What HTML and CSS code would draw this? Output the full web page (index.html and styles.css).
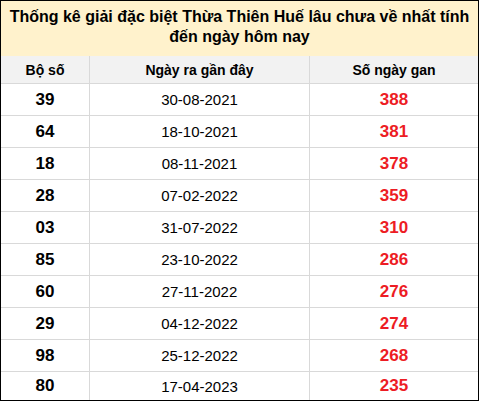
FILE: index.html
```html
<!DOCTYPE html>
<html lang="vi">
<head>
<meta charset="utf-8">
<link rel="stylesheet" href="styles.css">
</head>
<body>
<div class="box">
  <div class="title">Thống kê giải đặc biệt Thừa Thiên Huế lâu chưa về nhất tính<br>đến ngày hôm nay</div>
  <table class="tbl">
    <thead>
      <tr><th class="c1">Bộ số</th><th class="c2">Ngày ra gần đây</th><th class="c3">Số ngày gan</th></tr>
    </thead>
    <tbody>
      <tr><td class="num">39</td><td class="date">30-08-2021</td><td class="gan">388</td></tr>
      <tr><td class="num">64</td><td class="date">18-10-2021</td><td class="gan">381</td></tr>
      <tr><td class="num">18</td><td class="date">08-11-2021</td><td class="gan">378</td></tr>
      <tr><td class="num">28</td><td class="date">07-02-2022</td><td class="gan">359</td></tr>
      <tr><td class="num">03</td><td class="date">31-07-2022</td><td class="gan">310</td></tr>
      <tr><td class="num">85</td><td class="date">23-10-2022</td><td class="gan">286</td></tr>
      <tr><td class="num">60</td><td class="date">27-11-2022</td><td class="gan">276</td></tr>
      <tr><td class="num">29</td><td class="date">04-12-2022</td><td class="gan">274</td></tr>
      <tr><td class="num">98</td><td class="date">25-12-2022</td><td class="gan">268</td></tr>
      <tr class="last"><td class="num">80</td><td class="date">17-04-2023</td><td class="gan">235</td></tr>
    </tbody>
  </table>
</div>
</body>
</html>
```
FILE: styles.css
```css
html, body {
  margin: 0;
  padding: 0;
  background: #fff;
}
.box {
  width: 479px;
  height: 401px;
  box-sizing: border-box;
  border: 1px solid #000;
  overflow: hidden;
  font-family: "Liberation Sans", Arial, sans-serif;
  color: #000;
}
.title {
  background: #fff2cc;
  height: 55px;
  box-sizing: border-box;
  padding-top: 6px;
  text-align: center;
  font-weight: bold;
  font-size: 16px;
  line-height: 20px;
}
.tbl {
  width: 477px;
  border-collapse: collapse;
  table-layout: fixed;
}
.c1 { width: 88px; }
.c2 { width: 219px; }
.tbl th, .tbl td {
  padding: 0;
  text-align: center;
  border-left: 1px solid #d9d9d9;
  border-bottom: 1px solid #d9d9d9;
}
.tbl th:first-child, .tbl td:first-child { border-left: none; }
.tbl th {
  background: #f2f2f2;
  height: 27px;
  font-size: 14px;
  font-weight: bold;
}
.tbl td {
  height: 31px;
}
.tbl tr.last td { border-bottom: none; height: 28px; }
.num {
  font-size: 17px;
  font-weight: bold;
}
.date {
  font-size: 15px;
}
.gan {
  font-size: 17px;
  font-weight: bold;
  color: #ed1c24;
}
```
